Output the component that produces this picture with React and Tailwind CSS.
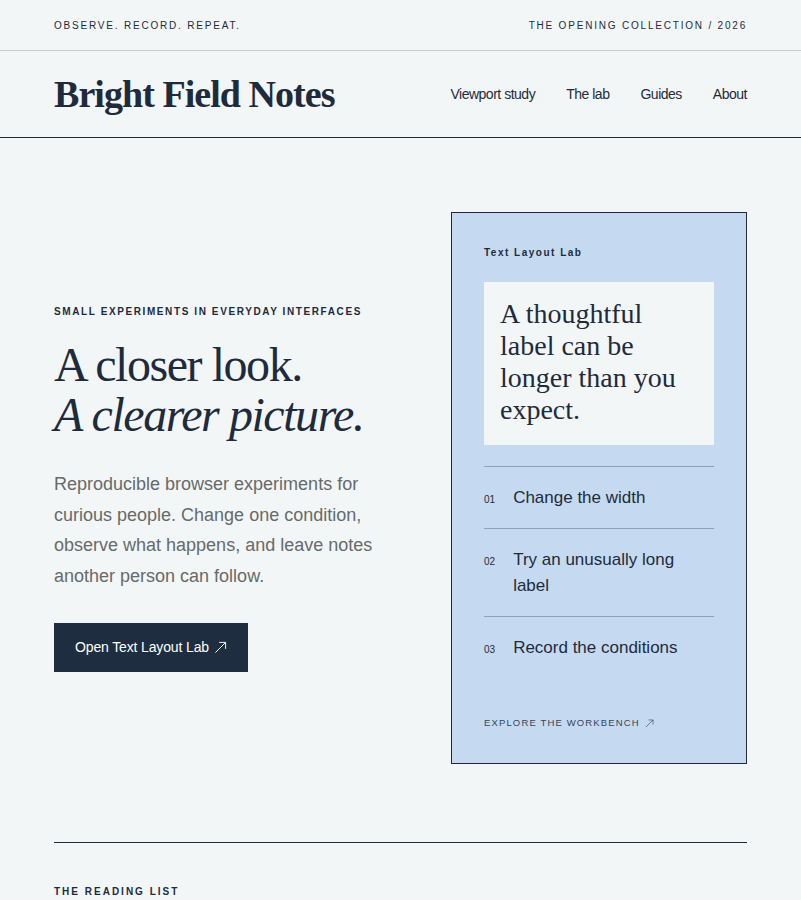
import React from 'react';

const serif = 'font-["Liberation_Serif",Georgia,serif]';

const steps = [
  { n: '01', label: 'Change the width' },
  { n: '02', label: 'Try an unusually long label' },
  { n: '03', label: 'Record the conditions' },
];

const navLinks = ['Viewport study', 'The lab', 'Guides', 'About'];

const Arrow = ({ className }) => (
  <svg viewBox="0 0 14 14" fill="none" stroke="currentColor" strokeWidth="1" className={className}>
    <path d="M1.5 12.5 L12.5 1.5" />
    <path d="M5.5 1.5 H12.5 V8.5" />
  </svg>
);

const App = () => {
  return (
    <div className='min-h-screen bg-[#f3f6f7] text-[#1e2b3c] font-["Liberation_Sans",Arial,sans-serif]'>
      <div className="border-b border-[#c9cccc]">
        <div className="mx-[54px] flex h-[50px] items-center justify-between text-[10px] tracking-[0.18em] uppercase">
          <span>Observe. Record. Repeat.</span>
          <span>The Opening Collection / 2026</span>
        </div>
      </div>

      <header className="border-b border-[#1e2b3c]">
        <div className="mx-[54px] flex h-[86px] items-center justify-between">
          <a href="#" className={`${serif} text-[38px] font-bold tracking-[-0.025em]`}>
            Bright Field Notes
          </a>
          <nav className="flex gap-[31px] text-[14px] tracking-[-0.035em]">
            {navLinks.map((l) => (
              <a key={l} href="#">{l}</a>
            ))}
          </nav>
        </div>
      </header>

      <main className="mx-[54px]">
        <section className="grid grid-cols-[1fr_296px] items-center gap-[48px] pt-[74px] pb-[78px]">
          <div>
            <p className="text-[10px] leading-[15px] font-bold uppercase tracking-[0.16em]">
              Small experiments in everyday interfaces
            </p>
            <h1 className={`${serif} mt-[21px] text-[48px] leading-[50px] tracking-[-0.03em]`}>
              A closer look.
              <br />
              <em>A clearer picture.</em>
            </h1>
            <p className="mt-[29px] max-w-[330px] text-[18px] leading-[30.5px] text-[#666a6b]">
              Reproducible browser experiments for curious people. Change one condition, observe what happens, and leave notes another person can follow.
            </p>
            <a
              href="#"
              className="mt-[32px] inline-flex h-[49px] items-center gap-[5px] bg-[#1e2d40] px-[21px] text-[14px] tracking-[-0.01em] text-white"
            >
              Open Text Layout Lab <Arrow className="h-[13px] w-[13px]" />
            </a>
          </div>

          <aside className="border border-[#1e2b3c] bg-[#c5daf1] px-[32px] pt-[32px] pb-[33px]">
            <p className="text-[10px] leading-[15px] font-bold tracking-[0.15em]">Text Layout Lab</p>
            <div className="mt-[22px] bg-[#f3f6f7] px-[16px] pt-[16px] pb-[19px]">
              <p className={`${serif} max-w-[185px] text-[28px] leading-[32px]`}>
                A thoughtful label can be longer than you expect.
              </p>
            </div>
            <ol className="mt-[21px] border-t border-[#8ea3b8]">
              {steps.map((s, i) => (
                <li
                  key={s.n}
                  className={`flex gap-[18px] py-[17.5px] ${i < steps.length - 1 ? 'border-b border-[#8ea3b8]' : ''}`}
                >
                  <span className="pt-[7px] text-[10px]">{s.n}</span>
                  <span className="text-[17px] leading-[26px]">{s.label}</span>
                </li>
              ))}
            </ol>
            <a href="#" className="mt-[38px] flex items-center gap-[5px] text-[9.5px] leading-[14px] uppercase tracking-[0.12em] text-[#34445a]">
              Explore the workbench <Arrow className="h-[9px] w-[9px]" />
            </a>
          </aside>
        </section>

        <div className="border-t border-[#1e2b3c] pt-[41px]">
          <p className="text-[10px] font-bold uppercase tracking-[0.2em]">The reading list</p>
        </div>
      </main>
    </div>
  );
};

export default App;
